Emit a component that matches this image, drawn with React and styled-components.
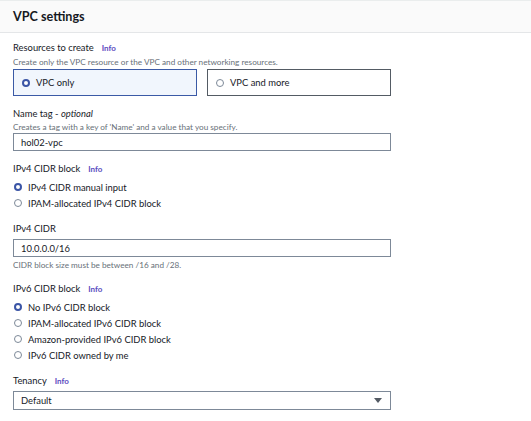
import React, { useState } from 'react';
import styled, { createGlobalStyle } from 'styled-components';

const GlobalStyle = createGlobalStyle`
  body {
    margin: 0;
    background: #ffffff;
    font-family: Lato, "Open Sans", sans-serif;
    color: #16191f;
  }
`;

const Panel = styled.div`
  width: 531px;
  height: 421px;
  overflow: hidden;
  background: #ffffff;
`;

const Header = styled.div`
  height: 31px;
  display: flex;
  align-items: center;
  padding-left: 13px;
  background: #fafafa;
  border-top: 1px solid #eaeded;
  border-bottom: 1px solid #e4e6e8;
`;

const Title = styled.h2`
  margin: 0;
  font-size: 12.6px;
  font-weight: 700;
  color: #16191f;
`;

const Body = styled.div`
  padding: 9px 0 0 13px;
  width: 378px;
`;

const Field = styled.div`
  margin-top: ${p => (p.$first ? 0 : 12)}px;
`;

const Label = styled.div`
  font-size: 9.4px;
  line-height: 12px;
  color: #16191f;
  display: flex;
  align-items: baseline;
  gap: 8px;
  em {
    font-style: italic;
    color: #16191f;
  }
`;

const Info = styled.a`
  font-size: 8px;
  font-weight: 700;
  color: #5a4cc0;
  text-decoration: none;
`;

const Hint = styled.div`
  margin-top: ${p => p.$top || 1}px;
  font-size: 8.2px;
  line-height: 12px;
  color: #687078;
`;

const Tiles = styled.div`
  display: grid;
  grid-template-columns: 184px 184px;
  gap: 10px;
  margin-top: 1px;
`;

const Tile = styled.label`
  height: 25px;
  display: flex;
  align-items: center;
  gap: 6px;
  padding-left: 8px;
  border: 1px solid ${p => (p.$on ? '#3b5aa6' : '#545b64')};
  background: ${p => (p.$on ? '#f1f6fd' : '#ffffff')};
  font-size: 9.4px;
  cursor: pointer;
`;

const Dot = styled.span`
  box-sizing: border-box;
  width: 8px;
  height: 8px;
  border-radius: 50%;
  flex-shrink: 0;
  border: ${p => (p.$on ? '2.5px solid #3b55a6' : '1px solid #7d8998')};
  background: #ffffff;
`;

const Radios = styled.div`
  margin-top: 4px;
  display: flex;
  flex-direction: column;
`;

const RadioRow = styled.label`
  height: 16px;
  display: flex;
  align-items: center;
  gap: 6px;
  padding-left: 1px;
  font-size: 9.4px;
  color: #16191f;
  cursor: pointer;
`;

const Input = styled.div`
  box-sizing: border-box;
  margin-top: ${p => p.$top || 0}px;
  height: ${p => p.$h || 18}px;
  display: flex;
  align-items: center;
  justify-content: space-between;
  padding: 0 8px 0 7px;
  border: 1px solid #7d8998;
  background: #ffffff;
  font-size: 9.4px;
  color: #16191f;
`;

const Caret = styled.span`
  width: 0;
  height: 0;
  border-left: 4px solid transparent;
  border-right: 4px solid transparent;
  border-top: 5px solid #545b64;
`;

const RadioGroup = ({ options, value, onChange }) => (
  <Radios>
    {options.map(o => (
      <RadioRow key={o} onClick={() => onChange(o)}>
        <Dot $on={value === o} />
        {o}
      </RadioRow>
    ))}
  </Radios>
);

const App = () => {
  const [resource, setResource] = useState('VPC only');
  const [ipv4, setIpv4] = useState('IPv4 CIDR manual input');
  const [ipv6, setIpv6] = useState('No IPv6 CIDR block');

  return (
    <Panel>
      <GlobalStyle />
      <Header>
        <Title>VPC settings</Title>
      </Header>
      <Body>
        <Field $first>
          <Label>
            Resources to create <Info>Info</Info>
          </Label>
          <Hint $top={2}>Create only the VPC resource or the VPC and other networking resources.</Hint>
          <Tiles>
            {['VPC only', 'VPC and more'].map(t => (
              <Tile key={t} $on={resource === t} onClick={() => setResource(t)}>
                <Dot $on={resource === t} />
                {t}
              </Tile>
            ))}
          </Tiles>
        </Field>

        <Field>
          <Label>
            <span>
              Name tag - <em>optional</em>
            </span>
          </Label>
          <Hint>Creates a tag with a key of 'Name' and a value that you specify.</Hint>
          <Input>hol02-vpc</Input>
        </Field>

        <Field>
          <Label>
            IPv4 CIDR block <Info>Info</Info>
          </Label>
          <RadioGroup
            options={['IPv4 CIDR manual input', 'IPAM-allocated IPv4 CIDR block']}
            value={ipv4}
            onChange={setIpv4}
          />
        </Field>

        <Field>
          <Label>IPv4 CIDR</Label>
          <Input $top={4}>10.0.0.0/16</Input>
          <Hint $top={2}>CIDR block size must be between /16 and /28.</Hint>
        </Field>

        <Field>
          <Label>
            IPv6 CIDR block <Info>Info</Info>
          </Label>
          <RadioGroup
            options={[
              'No IPv6 CIDR block',
              'IPAM-allocated IPv6 CIDR block',
              'Amazon-provided IPv6 CIDR block',
              'IPv6 CIDR owned by me',
            ]}
            value={ipv6}
            onChange={setIpv6}
          />
        </Field>

        <Field>
          <Label>
            Tenancy <Info>Info</Info>
          </Label>
          <Input $top={4} $h={19}>
            Default
            <Caret />
          </Input>
        </Field>
      </Body>
    </Panel>
  );
};

export default App;
